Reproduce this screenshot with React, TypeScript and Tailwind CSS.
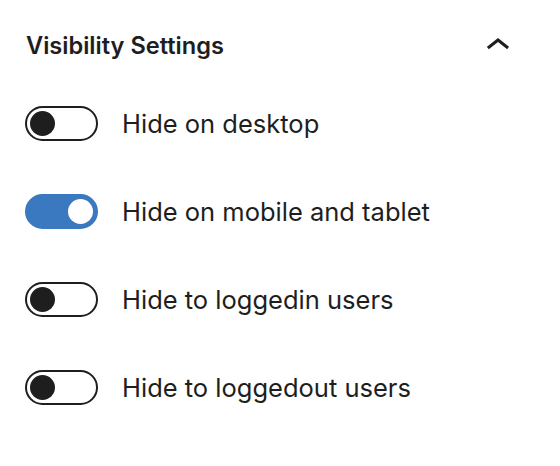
import { useState } from "react";

type Item = { id: string; label: string; on: boolean };

const initialItems: Item[] = [
  { id: "desktop", label: "Hide on desktop", on: false },
  { id: "mobile", label: "Hide on mobile and tablet", on: true },
  { id: "loggedin", label: "Hide to loggedin users", on: false },
  { id: "loggedout", label: "Hide to loggedout users", on: false },
];

function Toggle({ on, onClick }: { on: boolean; onClick: () => void }) {
  return (
    <button
      type="button"
      onClick={onClick}
      className={`flex h-[35px] w-[73px] shrink-0 items-center rounded-full border-2 px-[3px] ${
        on ? "justify-end border-[#3a79c0] bg-[#3a79c0]" : "justify-start border-[#1e1e1e] bg-white"
      }`}
    >
      <span className={`block h-[25px] w-[25px] rounded-full ${on ? "bg-white" : "bg-[#1e1e1e]"}`} />
    </button>
  );
}

export default function App() {
  const [items, setItems] = useState(initialItems);

  const toggle = (id: string) => {
    setItems((prev) => prev.map((item) => (item.id === id ? { ...item, on: !item.on } : item)));
  };

  return (
    <div
      className="h-[466px] w-[560px] bg-white pt-[22px] pl-[25px] pr-[38px] text-[#1e1e1e]"
      style={{ fontFamily: "Inter, 'Noto Sans', sans-serif" }}
    >
      <div className="flex h-[48px] items-center justify-between">
        <h2 className="ml-[1px] text-[23.6px] font-semibold">Visibility Settings</h2>
        <svg viewBox="0 0 24 24" width="48" height="48" fill="#1e1e1e">
          <path d="M6.5 12.4L12 8l5.5 4.4-.9 1.2L12 10l-4.6 3.6-1-1.2z" />
        </svg>
      </div>

      <div className="mt-[36px] flex flex-col gap-[53px]">
        {items.map((item) => (
          <div key={item.id} className="flex h-[35px] items-center gap-[24px]">
            <Toggle on={item.on} onClick={() => toggle(item.id)} />
            <span className="text-[25.5px] leading-none">{item.label}</span>
          </div>
        ))}
      </div>
    </div>
  );
}
